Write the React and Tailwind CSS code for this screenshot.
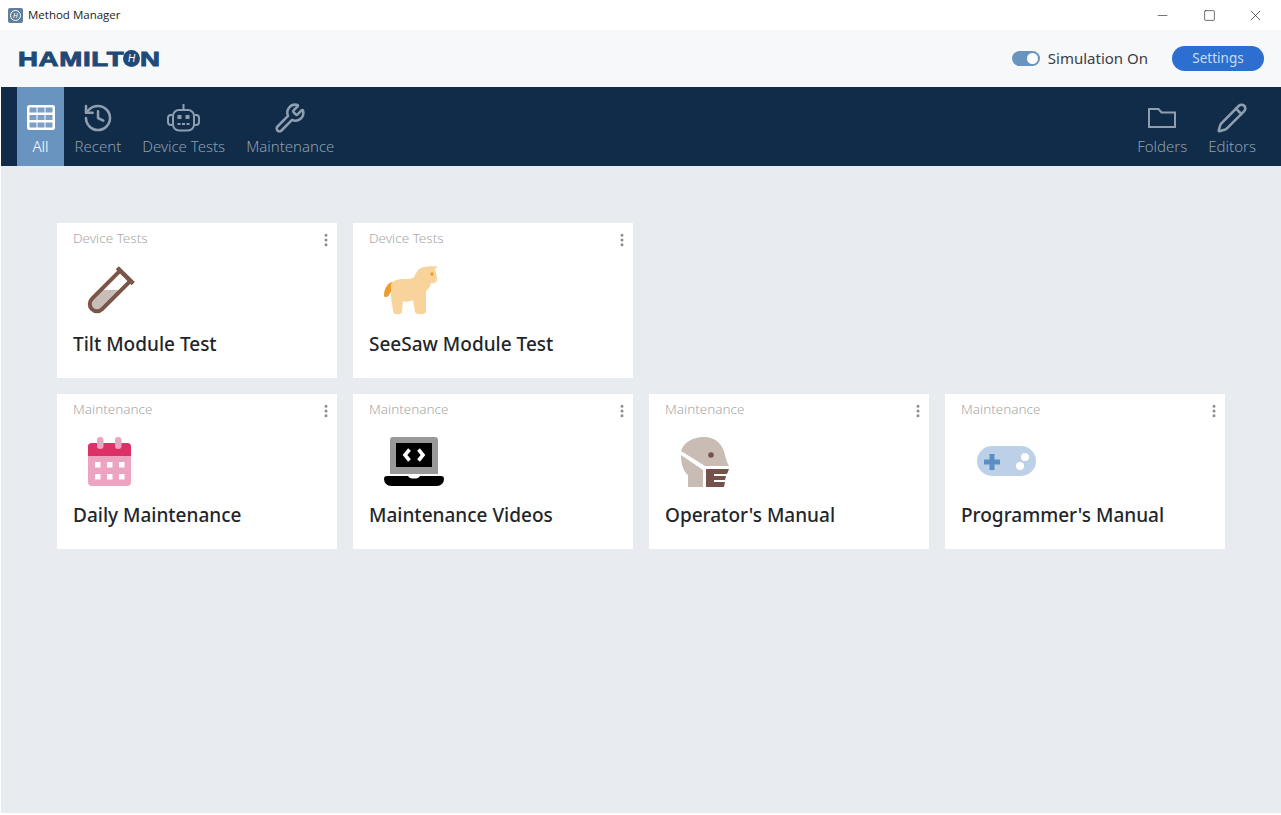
import { History, Minus, MoreVertical, Pencil, Square, Wrench, X } from 'lucide-react';

function GridIcon() {
  return (
    <svg width="28" height="25" viewBox="0 0 28 25">
      <rect x="0" y="0" width="28" height="25" rx="2.5" fill="#ffffff" />
      {[2.5, 10, 17.5].map((y) =>
        [2.5, 10.5, 18.5].map((x) => <rect key={`${x}-${y}`} x={x} y={y} width="7" height="5" fill="#7b9fc6" />)
      )}
    </svg>
  );
}

function RobotIcon() {
  return (
    <svg width="33" height="28" viewBox="0 0 33 28" fill="none" stroke="currentColor" strokeWidth="2">
      <path d="M16.5 0 V6" />
      <rect x="6" y="6" width="21" height="20.5" rx="6" />
      <path d="M5.5 11 H4 a3 3 0 0 0 -3 3 V18 a3 3 0 0 0 3 3 H5.5 M27.5 11 H29 a3 3 0 0 1 3 3 V18 a3 3 0 0 1 -3 3 H27.5" />
      <rect x="10.5" y="11" width="4" height="4" fill="currentColor" stroke="none" />
      <rect x="18.5" y="11" width="4" height="4" fill="currentColor" stroke="none" />
      <path d="M10.5 20 H22.5" strokeDasharray="3 1.5" strokeWidth="1.8" />
    </svg>
  );
}

function FolderIcon() {
  return (
    <svg width="28" height="20" viewBox="0 0 28 20" fill="none" stroke="currentColor" strokeWidth="2">
      <path d="M1 1 H10.5 L13.5 4.5 H27 V19 H1 Z" />
    </svg>
  );
}

function TubeIcon() {
  return (
    <svg width="60" height="50" viewBox="0 0 60 50">
      <path transform="translate(13 38) rotate(45)" d="M-7.25 -40 V0 a7.25 7.25 0 0 0 14.5 0 V-40 Z" fill="#c9bdb8" />
      <rect x="0" y="0" width="60" height="24" fill="#ffffff" />
      <g transform="translate(13 38) rotate(45)" fill="none" stroke="#7a5548">
        <path d="M-7.25 -40 V0 a7.25 7.25 0 0 0 14.5 0 V-40" strokeWidth="4" />
        <path d="M-11.3 -40 H11.3" strokeWidth="4.5" />
      </g>
    </svg>
  );
}

function HorseIcon() {
  return (
    <svg width="60" height="50" viewBox="0 0 60 50">
      <path d="M12 16 C8 17 4 22 4 30 C5 32 8 31 9 29 L12 24 Z" fill="#ee9c2a" />
      <path d="M11 18 C13 14 19 13 24 13 C29 13 32 13 34 11 C36 7 38 3 42 1.5 C47 0 53 0 58 0.5 L55 3 C56 6 57 10 57 13 C57 17 54 18 51 17 C50 20 49 23 46 25 L46 46 C45 49 36 49 35 46 L33 34 C29 36 26 36 23 35 L22 46 C21 49 14 49 13 46 C13 40 11 36 11 28 Z" fill="#f8d49c" />
      <circle cx="52" cy="8" r="1.7" fill="#ee9c2a" />
    </svg>
  );
}

function CalendarIcon() {
  return (
    <svg width="60" height="50" viewBox="0 0 60 50">
      <rect x="4" y="6" width="43" height="43" rx="4" fill="#eca4c2" />
      <path d="M4 19 V10 a4 4 0 0 1 4 -4 H43 a4 4 0 0 1 4 4 V19 Z" fill="#de2f67" />
      <rect x="13" y="0" width="6.5" height="12" rx="3" fill="#eca4c2" />
      <rect x="31" y="0" width="6.5" height="12" rx="3" fill="#eca4c2" />
      {[25, 37].map((y) =>
        [11, 23, 35].map((x) => <rect key={`${x}-${y}`} x={x} y={y} width="5.5" height="5.5" fill="#ffffff" />)
      )}
    </svg>
  );
}

function LaptopIcon() {
  return (
    <svg width="60" height="50" viewBox="-4 0 60 50" className="overflow-visible">
      <path d="M6 3 a3 3 0 0 1 3 -3 H51 a3 3 0 0 1 3 3 V37 H6 Z" fill="#999999" />
      <rect x="12" y="6" width="36" height="24" fill="#000000" />
      <path d="M25.5 12.5 L21 18 L25.5 23.5 M34.5 12.5 L39 18 L34.5 23.5" fill="none" stroke="#ffffff" strokeWidth="3.6" />
      <path d="M3 39 H24 C25 41 27 41.5 30 41.5 C33 41.5 35 41 36 39 H57 A3 3 0 0 1 60 42 A7 7 0 0 1 53 49 H7 A7 7 0 0 1 0 42 A3 3 0 0 1 3 39 Z" fill="#000000" />
    </svg>
  );
}

function OperatorIcon() {
  return (
    <svg width="60" height="50" viewBox="0 0 60 50" className="overflow-visible">
      <path d="M5 14 C8 5 17 0 28 0 C40 0 47 8 49 18 C50 23 52 27 53 29 H29 Z" fill="#c9bcb5" />
      <path d="M5 18 L27 33 V50 H12 V38 C8 35 5 28 5 18 Z" fill="#c9bcb5" />
      <circle cx="35" cy="18" r="2.8" fill="#75534a" />
      <path d="M30 32 H53 L51 37 H38 V39 H50 L49 43 H38 V45 H49 L48 50 H30 Z" fill="#75534a" />
    </svg>
  );
}

function GamepadIcon() {
  return (
    <svg width="60" height="50" viewBox="-5 0 60 50" className="overflow-visible">
      <rect x="0" y="9" width="59" height="30" rx="15" fill="#bcd0e8" />
      <path d="M7 25 H23 M15 17 V33" stroke="#5b8fc4" strokeWidth="5" />
      <circle cx="48" cy="20" r="4" fill="#ffffff" />
      <circle cx="43" cy="29" r="4" fill="#ffffff" />
    </svg>
  );
}

const tabs = [
  { label: 'All', icon: GridIcon, active: true },
  { label: 'Recent', icon: History },
  { label: 'Device Tests', icon: RobotIcon },
  { label: 'Maintenance', icon: Wrench },
];

const cards = [
  { category: 'Device Tests', title: 'Tilt Module Test', icon: TubeIcon },
  { category: 'Device Tests', title: 'SeeSaw Module Test', icon: HorseIcon },
  { category: 'Maintenance', title: 'Daily Maintenance', icon: CalendarIcon, newRow: true },
  { category: 'Maintenance', title: 'Maintenance Videos', icon: LaptopIcon },
  { category: 'Maintenance', title: "Operator's Manual", icon: OperatorIcon },
  { category: 'Maintenance', title: "Programmer's Manual", icon: GamepadIcon },
];

function NavItem({ label, icon: Icon, active }) {
  return (
    <div className={`flex h-full flex-col items-center px-[10.5px] ${active ? 'w-[47px] bg-[#6a94c0] text-white' : 'text-[#8f9fb0]'}`}>
      <div className="mt-[15px] flex h-[31px] items-center justify-center">
        <Icon size={32} strokeWidth={1.9} />
      </div>
      <span className="mt-[3px] whitespace-nowrap text-[15px] font-light leading-[20px]">{label}</span>
    </div>
  );
}

function Card({ category, title, icon: Icon, newRow }) {
  return (
    <div className={`h-[155px] bg-white pl-4 pr-[3px] pt-[6px] ${newRow ? 'col-start-1' : ''}`}>
      <div className="flex items-center justify-between">
        <span className="text-[13.5px] font-light leading-[19px] text-[#a8a8a8]">{category}</span>
        <MoreVertical size={16} strokeWidth={2.5} className="mt-[3px] text-[#8c8c8c]" />
      </div>
      <div className="mt-[18px] ml-[11px] h-[50px] w-[60px]">
        <Icon />
      </div>
      <div className="mt-[13px] text-[19px] font-medium leading-[30px] text-[#22262a]">{title}</div>
    </div>
  );
}

export default function App() {
  return (
    <div className="flex h-[815px] flex-col overflow-hidden bg-white pb-[2px] pl-px font-['Noto_Sans',sans-serif]">
      {/* Title bar */}
      <div className="-ml-px flex h-[30px] shrink-0 items-center bg-white pl-2 text-[#222222]">
        <div className="flex h-[15px] w-[15px] items-center justify-center rounded-[2px] bg-[#5f7f9a]">
          <div className="flex h-[11px] w-[11px] items-center justify-center rounded-full border border-white text-[7px] italic leading-none text-white">H</div>
        </div>
        <span className="ml-[5px] font-['Open_Sans',sans-serif] text-[11.5px]">Method Manager</span>
        <div className="ml-auto flex items-center gap-[33px] pr-[17px]">
          <Minus size={15} strokeWidth={1} />
          <Square size={13} strokeWidth={1.2} />
          <X size={17} strokeWidth={1} className="-ml-[2px]" />
        </div>
      </div>

      {/* Header */}
      <div className="-ml-px flex h-[57px] shrink-0 items-center bg-[#f7f8fa] pl-[18px] pr-[17px]">
        <div className="flex items-center font-['Liberation_Sans',sans-serif] text-[20px] font-bold leading-none tracking-[0.5px] text-[#1f4a78] [-webkit-text-stroke:0.9px_#1f4a78]">
          <span className="inline-block w-[105px] origin-left scale-x-[1.38]">HAMILT</span>
          <span className="flex h-[17px] w-[17px] items-center justify-center rounded-full bg-[#1f4a78] text-[10px] font-normal italic tracking-normal text-white [-webkit-text-stroke:0]">H</span>
          <span className="inline-block w-[20px] origin-left scale-x-[1.38]">N</span>
        </div>
        <div className="ml-auto flex h-[15px] w-[28px] items-center justify-end rounded-full bg-[#6a94c0] pr-[2px]">
          <div className="h-[11px] w-[11px] rounded-full bg-white" />
        </div>
        <span className="ml-[8px] text-[15px] text-[#3a3f45]">Simulation On</span>
        <button className="ml-[24px] h-[25px] w-[92px] rounded-full bg-[#2c6fd0] text-[13.5px] leading-none text-[#c9dcf5]">Settings</button>
      </div>

      {/* Nav */}
      <div className="flex h-[79px] shrink-0 bg-[#102c48] pl-4 pr-[14.5px]">
        {tabs.map((t) => (
          <NavItem key={t.label} {...t} />
        ))}
        <div className="ml-auto flex h-full">
          <NavItem label="Folders" icon={FolderIcon} />
          <NavItem label="Editors" icon={Pencil} />
        </div>
      </div>

      {/* Cards */}
      <div className="grid flex-1 grid-cols-4 content-start gap-4 bg-[#e8ebef] pl-[56px] pr-[56px] pt-[57px]">
        {cards.map((c) => (
          <Card key={c.title} {...c} />
        ))}
      </div>
    </div>
  );
}
